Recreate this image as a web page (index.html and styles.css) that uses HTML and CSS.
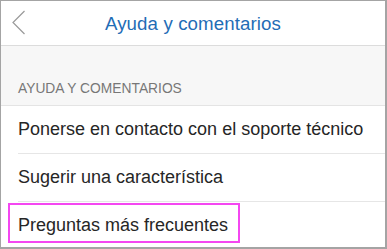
FILE: index.html
```html
<!DOCTYPE html>
<html lang="es">
<head>
<meta charset="utf-8">
<title>Ayuda y comentarios</title>
<link rel="stylesheet" href="styles.css">
</head>
<body>
<div class="frame">
  <header class="topbar">
    <div class="back">
      <svg width="14" height="26" viewBox="0 0 14 26" aria-hidden="true">
        <path d="M12.5 1 L1 12.5 L12.5 24" fill="none" stroke="#9a9a9a" stroke-width="1.2"/>
      </svg>
    </div>
    <h1 class="title">Ayuda y comentarios</h1>
    <div></div>
  </header>
  <div class="section-head">AYUDA Y COMENTARIOS</div>
  <ul class="list">
    <li class="item">Ponerse en contacto con el soporte técnico</li>
    <li class="item">Sugerir una característica</li>
    <li class="item last">Preguntas más frecuentes<span class="highlight"></span></li>
  </ul>
</div>
</body>
</html>
```
FILE: styles.css
```css
html, body {
  margin: 0;
  padding: 0;
  background: #ffffff;
}
.frame {
  width: 387px;
  height: 249px;
  box-sizing: border-box;
  border: 1px solid #a4a4a4;
  border-right-width: 2px;
  border-bottom-width: 2px;
  overflow: hidden;
  display: flex;
  flex-direction: column;
  font-family: "Liberation Sans", Arial, sans-serif;
  background: #ffffff;
}
.topbar {
  height: 44px;
  flex: 0 0 44px;
  border-bottom: 1px solid #dcdcdc;
  display: grid;
  grid-template-columns: 1fr auto 1fr;
  align-items: center;
  background: #ffffff;
}
.back {
  padding-left: 11px;
  display: flex;
  align-items: center;
  height: 26px;
  margin-top: -1px;
}
.back svg {
  display: block;
}
.title {
  margin: 0;
  font-size: 18.7px;
  font-weight: normal;
  color: #1f6db6;
  letter-spacing: 0.1px;
  padding-top: 1px;
}
.section-head {
  height: 60px;
  flex: 0 0 60px;
  box-sizing: border-box;
  background: #f7f7f7;
  border-bottom: 1px solid #e4e4e4;
  padding: 0 0 9px 17px;
  display: flex;
  align-items: flex-end;
  font-size: 13.8px;
  color: #777777;
}
.list {
  list-style: none;
  margin: 0;
  padding: 0;
}
.item {
  position: relative;
  margin-left: 17px;
  height: 47px;
  border-bottom: 1px solid #e6e6e6;
  display: flex;
  align-items: center;
  font-size: 18px;
  color: #262626;
}
.item.last {
  border-bottom: none;
  height: 44px;
  padding-top: 1px;
}
.highlight {
  position: absolute;
  left: -10px;
  top: 1px;
  width: 232px;
  height: 40px;
  box-sizing: border-box;
  border: 2px solid #f447f1;
}
```
